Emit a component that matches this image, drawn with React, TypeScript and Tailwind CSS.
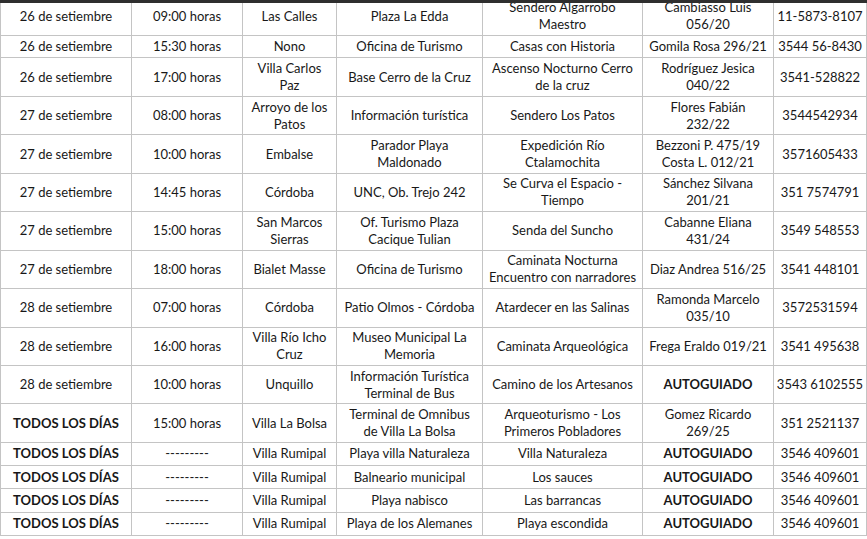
type Row = {
  date: string;
  time: string;
  city: string;
  place: string;
  activity: string;
  guide: string;
  phone: string;
  tall?: boolean;
  h?: string;
};

// line breaks follow the original sheet
const rows: Row[] = [
  { date: '26 de setiembre', time: '09:00 horas', city: 'Las Calles', place: 'Plaza La Edda', activity: 'Sendero Algarrobo\nMaestro', guide: 'Cambiasso Luis\n056/20', phone: '11-5873-8107', tall: true },
  { date: '26 de setiembre', time: '15:30 horas', city: 'Nono', place: 'Oficina de Turismo', activity: 'Casas con Historia', guide: 'Gomila Rosa 296/21', phone: '3544 56-8430', h: 'h-[22.5px]' },
  { date: '26 de setiembre', time: '17:00 horas', city: 'Villa Carlos\nPaz', place: 'Base Cerro de la Cruz', activity: 'Ascenso Nocturno Cerro\nde la cruz', guide: 'Rodríguez Jesica\n040/22', phone: '3541-528822', tall: true },
  { date: '27 de setiembre', time: '08:00 horas', city: 'Arroyo de los\nPatos', place: 'Información turística', activity: 'Sendero Los Patos', guide: 'Flores Fabián\n232/22', phone: '3544542934', tall: true },
  { date: '27 de setiembre', time: '10:00 horas', city: 'Embalse', place: 'Parador Playa\nMaldonado', activity: 'Expedición Río\nCtalamochita', guide: 'Bezzoni P. 475/19\nCosta L. 012/21', phone: '3571605433', tall: true },
  { date: '27 de setiembre', time: '14:45 horas', city: 'Córdoba', place: 'UNC, Ob. Trejo 242', activity: 'Se Curva el Espacio -\nTiempo', guide: 'Sánchez Silvana\n201/21', phone: '351 7574791', tall: true },
  { date: '27 de setiembre', time: '15:00 horas', city: 'San Marcos\nSierras', place: 'Of. Turismo Plaza\nCacique Tulian', activity: 'Senda del Suncho', guide: 'Cabanne Eliana\n431/24', phone: '3549 548553', tall: true },
  { date: '27 de setiembre', time: '18:00 horas', city: 'Bialet Masse', place: 'Oficina de Turismo', activity: 'Caminata Nocturna\nEncuentro con narradores', guide: 'Diaz Andrea 516/25', phone: '3541 448101', tall: true },
  { date: '28 de setiembre', time: '07:00 horas', city: 'Córdoba', place: 'Patio Olmos - Córdoba', activity: 'Atardecer en las Salinas', guide: 'Ramonda Marcelo\n035/10', phone: '3572531594', tall: true },
  { date: '28 de setiembre', time: '16:00 horas', city: 'Villa Río Icho\nCruz', place: 'Museo Municipal La\nMemoria', activity: 'Caminata Arqueológica', guide: 'Frega Eraldo 019/21', phone: '3541 495638', tall: true },
  { date: '28 de setiembre', time: '10:00 horas', city: 'Unquillo', place: 'Información Turística\nTerminal de Bus', activity: 'Camino de los Artesanos', guide: 'AUTOGUIADO', phone: '3543 6102555', tall: true },
  { date: 'TODOS LOS DÍAS', time: '15:00 horas', city: 'Villa La Bolsa', place: 'Terminal de Omnibus\nde Villa La Bolsa', activity: 'Arqueoturismo - Los\nPrimeros Pobladores', guide: 'Gomez Ricardo\n269/25', phone: '351 2521137', tall: true },
  { date: 'TODOS LOS DÍAS', time: '---------', city: 'Villa Rumipal', place: 'Playa villa Naturaleza', activity: 'Villa Naturaleza', guide: 'AUTOGUIADO', phone: '3546 409601' },
  { date: 'TODOS LOS DÍAS', time: '---------', city: 'Villa Rumipal', place: 'Balneario municipal', activity: 'Los sauces', guide: 'AUTOGUIADO', phone: '3546 409601' },
  { date: 'TODOS LOS DÍAS', time: '---------', city: 'Villa Rumipal', place: 'Playa nabisco', activity: 'Las barrancas', guide: 'AUTOGUIADO', phone: '3546 409601' },
  { date: 'TODOS LOS DÍAS', time: '---------', city: 'Villa Rumipal', place: 'Playa de los Alemanes', activity: 'Playa escondida', guide: 'AUTOGUIADO', phone: '3546 409601' },
];

const cols = ['w-[131px]', 'w-[111px]', 'w-[94px]', 'w-[146px]', 'w-[160px]', 'w-[131px]', 'w-[93px]'];

function Cell({ text, bold }: { text: string; bold?: boolean }) {
  return (
    <td className="overflow-hidden whitespace-pre border border-[#c4c4c4] p-0 text-center align-middle">
      <span className={bold ? 'font-bold' : ''}>{text}</span>
    </td>
  );
}

export default function App() {
  return (
    <div className="relative h-[539px] w-[867px] overflow-hidden bg-white font-['Lato',sans-serif] text-[13px] leading-[17px] text-[#181818]">
      {/* top edge of the scan */}
      <div className="absolute left-0 top-0 z-10 h-[3px] w-full bg-[#2f2f2f]" />

      <table className="-mt-[3.5px] w-[866px] table-fixed border-collapse">
        <colgroup>
          {cols.map((c, i) => (
            <col key={i} className={c} />
          ))}
        </colgroup>
        <tbody>
          {rows.map((r, i) => {
            const daily = r.date === 'TODOS LOS DÍAS';
            return (
              <tr key={i} className={r.h ?? (r.tall ? 'h-[38.45px]' : 'h-[23.3px]')}>
                <Cell text={r.date} bold={daily} />
                <Cell text={r.time} />
                <Cell text={r.city} />
                <Cell text={r.place} />
                <Cell text={r.activity} />
                <Cell text={r.guide} bold={r.guide === 'AUTOGUIADO'} />
                <Cell text={r.phone} />
              </tr>
            );
          })}
        </tbody>
      </table>
    </div>
  );
}
